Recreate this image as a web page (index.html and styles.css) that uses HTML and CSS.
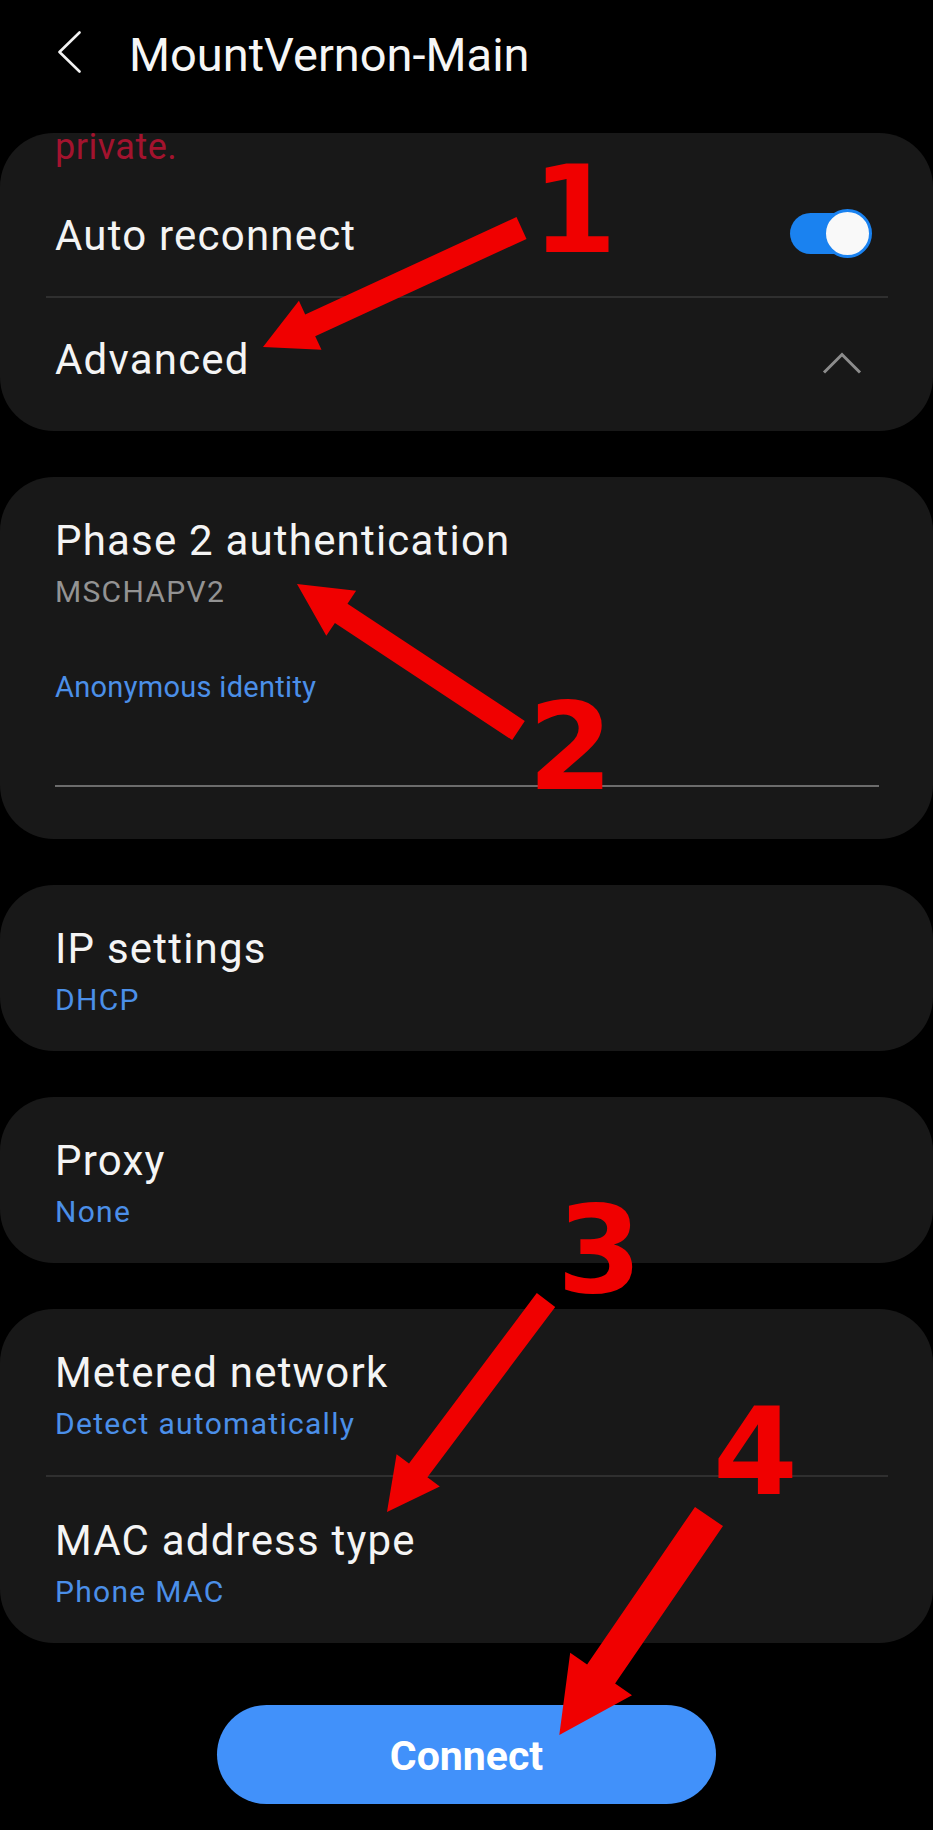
FILE: index.html
```html
<!DOCTYPE html>
<html lang="en">
<head>
<meta charset="utf-8">
<title>MountVernon-Main</title>
<link rel="stylesheet" href="styles.css">
</head>
<body>
<div class="screen">
  <header class="appbar">
    <svg class="back" viewBox="0 0 24 42" width="24" height="42" aria-hidden="true">
      <path d="M22.5 1.5 L2.5 21 L22.5 40.5" fill="none" stroke="#f2f2f2" stroke-width="2.6" stroke-linecap="round" stroke-linejoin="round"/>
    </svg>
    <h1 class="title">MountVernon-Main</h1>
  </header>

  <main class="list">
    <section class="card card-top">
      <p class="warning">private.</p>
      <div class="row row-toggle">
        <span class="label">Auto reconnect</span>
        <span class="switch"><span class="track"></span><span class="knob"></span></span>
      </div>
      <div class="divider"></div>
      <div class="row row-adv">
        <span class="label">Advanced</span>
        <svg class="chev-up" viewBox="0 0 40 24" width="40" height="24" aria-hidden="true">
          <path d="M2 21.5 L20 3.5 L38 21.5" fill="none" stroke="#8c8c8c" stroke-width="3"/>
        </svg>
      </div>
    </section>

    <section class="card">
      <div class="item item-open">
        <div class="label">Phase 2 authentication</div>
        <div class="sub sub-grey">MSCHAPV2</div>
      </div>
      <div class="field">
        <div class="field-label">Anonymous identity</div>
        <div class="field-input"></div>
      </div>
    </section>

    <section class="card">
      <div class="item">
        <div class="label">IP settings</div>
        <div class="sub">DHCP</div>
      </div>
    </section>

    <section class="card">
      <div class="item">
        <div class="label">Proxy</div>
        <div class="sub">None</div>
      </div>
    </section>

    <section class="card">
      <div class="item">
        <div class="label">Metered network</div>
        <div class="sub">Detect automatically</div>
      </div>
      <div class="divider"></div>
      <div class="item">
        <div class="label">MAC address type</div>
        <div class="sub">Phone MAC</div>
      </div>
    </section>
  </main>

  <div class="cta">
    <button class="connect" type="button">Connect</button>
  </div>

  <div class="annotations" aria-hidden="true">
    <svg class="arrows" viewBox="0 0 933 1830" width="933" height="1830">
      <polygon fill="#f00000" points="516.5,217.1 305.2,314.4 298.9,300.8 263,347 321.5,349.8 315.2,336.2 526.5,238.9"/>
      <polygon fill="#f00000" points="524.8,720.9 347.5,603.7 356.1,590.8 297,584 326.3,635.8 334.9,622.9 512.2,740.1"/>
      <polygon fill="#f00000" points="536.8,1293.1 409,1463.5 396.6,1454.2 387,1512 439.8,1486.6 427.4,1477.3 555.2,1306.9"/>
      <polygon fill="#f00000" points="695,1506.9 587.1,1664.4 570.2,1652.8 559.3,1735 632,1695.2 615.1,1683.6 723,1526.1"/>
    </svg>
    <span class="num num-1">1</span>
    <span class="num num-2">2</span>
    <span class="num num-3">3</span>
    <span class="num num-4">4</span>
  </div>
</div>
</body>
</html>
```

FILE: styles.css
```css
* { box-sizing: border-box; }

html, body {
  margin: 0;
  padding: 0;
  background: #000;
}

body {
  font-family: Roboto, "Noto Sans", "Liberation Sans", sans-serif;
  color: #f4f4f4;
}

.screen {
  position: relative;
  width: 933px;
  height: 1830px;
  overflow: hidden;
  background: #000;
}

/* App bar */
.appbar {
  display: flex;
  align-items: flex-start;
  height: 133px;
  padding: 27px 0 0 57px;
}

.back {
  display: block;
  margin-top: 4px;
  flex: none;
}

.title {
  margin: 0 0 0 48px;
  font-size: 47px;
  line-height: 56px;
  font-weight: 400;
  color: #f6f6f6;
  white-space: nowrap;
}

/* List */
.list {
  display: flex;
  flex-direction: column;
  gap: 46px;
}

.card {
  background: #181818;
  border-radius: 54px;
  overflow: hidden;
}

.label {
  font-size: 42px;
  line-height: 50px;
  letter-spacing: 1.2px;
  color: #f4f4f4;
  white-space: nowrap;
}

.sub {
  margin-top: 7px;
  font-size: 30px;
  line-height: 38px;
  letter-spacing: 1.3px;
  color: #4b8fe8;
}

.sub-grey {
  color: #939393;
}

.divider {
  height: 2px;
  margin: 0 45px 0 46px;
  background: #2f2f2f;
}

/* First card */
.warning {
  margin: -6px 0 0 55px;
  font-size: 36px;
  line-height: 40px;
  letter-spacing: 0.5px;
  color: #a3132e;
}

.row {
  display: flex;
  align-items: center;
  justify-content: space-between;
}

.row-toggle {
  padding: 44px 61px 35px 55px;
}

.row-adv {
  padding: 37px 71px 46px 55px;
}

.switch {
  position: relative;
  width: 82px;
  height: 49px;
  margin-top: -6px;
  flex: none;
}

.track {
  position: absolute;
  left: 0;
  top: 4px;
  width: 76px;
  height: 41px;
  border-radius: 21px;
  background: #1a82f0;
}

.knob {
  position: absolute;
  right: 0;
  top: 0;
  width: 49px;
  height: 49px;
  border-radius: 50%;
  background: #f9f9f9;
  border: 3px solid #1a82f0;
}

.chev-up {
  display: block;
  margin-top: 6px;
  flex: none;
}

/* Items */
.item {
  padding: 39px 55px 32px;
}

.item-open {
  padding-bottom: 0;
}

.field {
  padding: 57px 54px 52px 55px;
}

.field-label {
  font-size: 29px;
  line-height: 38px;
  letter-spacing: 0.3px;
  color: #4b8fe8;
}

.field-input {
  height: 81px;
  border-bottom: 2px solid #6c6c6c;
}

/* Connect button */
.cta {
  display: flex;
  justify-content: center;
  padding-top: 62px;
}

.connect {
  width: 499px;
  height: 99px;
  padding: 4px 0 0;
  border: 0;
  border-radius: 50px;
  background: #4191fa;
  color: #fff;
  font-family: Roboto, "Noto Sans", "Liberation Sans", sans-serif;
  font-size: 41px;
  line-height: 95px;
  font-weight: 700;
}

/* Red annotations */
.annotations {
  position: absolute;
  left: 0;
  top: 0;
  width: 933px;
  height: 1830px;
  pointer-events: none;
}

.arrows {
  position: absolute;
  left: 0;
  top: 0;
}

.num {
  position: absolute;
  font-family: "DejaVu Sans", Verdana, sans-serif;
  font-weight: 700;
  font-size: 122px;
  line-height: 1;
  color: #f00000;
}

.num-1 { left: 532px; top: 149px; }
.num-2 { left: 528px; top: 686px; }
.num-3 { left: 557px; top: 1189px; }
.num-4 { left: 713px; top: 1391px; }
```
